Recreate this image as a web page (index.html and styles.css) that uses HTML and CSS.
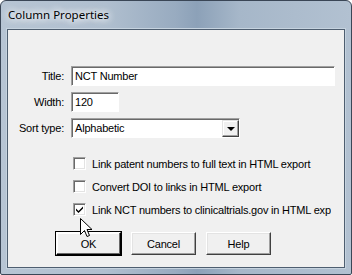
FILE: index.html
```html
<!DOCTYPE html>
<html lang="en">
<head>
    <meta charset="UTF-8">
    <title>Column Properties</title>
    <link rel="stylesheet" href="styles.css">
</head>
<body>
    <div class="window">
        <div class="titlebar">Column Properties</div>
        <div class="client">
            <!-- field rows -->
            <div class="fields">
                <label class="field-label">Title:</label>
                <div class="edit edit-title">NCT Number</div>
                <label class="field-label">Width:</label>
                <div class="edit edit-width">120</div>
                <label class="field-label">Sort type:</label>
                <div class="combo">
                    <div class="combo-text">Alphabetic</div>
                    <div class="combo-btn"><span class="arrow"></span></div>
                </div>
            </div>

            <!-- options -->
            <div class="checks">
                <div class="check-row">
                    <span class="box"></span>
                    <span class="check-text">Link patent numbers to full text in HTML export</span>
                </div>
                <div class="check-row">
                    <span class="box"></span>
                    <span class="check-text">Convert DOI to links in HTML export</span>
                </div>
                <div class="check-row">
                    <span class="box">
                        <svg width="9" height="9" viewBox="0 0 9 9"><path d="M1 3.5 L3.5 6 L8 1.5 L8 3.5 L3.5 8 L1 5.5 Z" fill="#000"/></svg>
                    </span>
                    <span class="check-text">Link NCT numbers to clinicaltrials.gov in HTML export</span>
                </div>
            </div>

            <div class="buttons">
                <button class="btn btn-default">OK</button>
                <button class="btn">Cancel</button>
                <button class="btn">Help</button>
            </div>

            <svg class="cursor" width="13" height="20" viewBox="0 0 13 20">
                <path d="M0.5 0.5 L0.5 16.5 L4.5 12.5 L7 18.5 L9.5 17.5 L7 11.5 L12 11.5 Z" fill="#fff" stroke="#000" stroke-width="1" stroke-linejoin="miter"/>
            </svg>
        </div>
    </div>
</body>
</html>
```

FILE: styles.css
```css
body {
    margin: 0;
    background: #fff;
}

.window {
    position: relative;
    width: 352px;
    height: 275px;
    box-sizing: border-box;
    border: 1px solid #3a4656;
    border-radius: 6px 6px 2px 2px;
    background: linear-gradient(90deg, #b7c5d4 0%, #b0bfcf 30%, #98abc0 50%, #8ca1b8 56%, #a6b7c9 68%, #b2c1d1 100%);
    display: flex;
    flex-direction: column;
}

.titlebar {
    height: 28px;
    padding-left: 7px;
    font-family: "Noto Sans", "Open Sans", sans-serif;
    font-size: 11.5px;
    line-height: 28px;
    color: #000;
    text-shadow: 0 0 6px #fff, 0 0 8px #fff, 0 0 10px #e8eef4;
}

.client {
    position: relative;
    flex: 1;
    margin: 0 6px 6px 6px;
    border: 1px solid #4e5e70;
    background: #f0f0f0;
    font-family: "Liberation Sans", Arial, sans-serif;
    font-size: 11px;
    letter-spacing: -0.2px;
    color: #000;
    box-shadow: 0 0 0 1px #c6d3df;
}

.fields {
    display: grid;
    grid-template-columns: 56px auto;
    column-gap: 7px;
    row-gap: 6px;
    margin-top: 36px;
    align-items: center;
}

.field-label {
    text-align: right;
}

.edit, .combo {
    height: 20px;
    box-sizing: border-box;
    background: #fff;
    border-top: 1px solid #a0a0a0;
    border-left: 1px solid #a0a0a0;
    border-right: 1px solid #fff;
    border-bottom: 1px solid #fff;
    box-shadow: inset 1px 1px 0 #696969;
    padding: 3px 0 0 3px;
    line-height: 13px;
}

.edit-title {
    width: 264px;
}

.edit-width {
    width: 48px;
}

.combo {
    width: 169px;
    display: flex;
    padding: 0;
}

.combo-text {
    flex: 1;
    padding: 3px 0 0 3px;
}

.combo-btn {
    width: 17px;
    height: 17px;
    margin: 1px 0 0 0;
    box-sizing: border-box;
    background: #f0f0f0;
    border-top: 1px solid #e3e3e3;
    border-left: 1px solid #e3e3e3;
    border-right: 1px solid #404040;
    border-bottom: 1px solid #404040;
    box-shadow: inset -1px -1px 0 #a0a0a0, inset 1px 1px 0 #fff;
    display: flex;
    align-items: center;
    justify-content: center;
}

.arrow {
    width: 0;
    height: 0;
    border-left: 4px solid transparent;
    border-right: 4px solid transparent;
    border-top: 4px solid #000;
    margin-top: 1px;
}

.checks {
    display: flex;
    flex-direction: column;
    gap: 10px;
    margin: 19px 0 0 65px;
}

.check-row {
    display: flex;
    align-items: center;
    gap: 6px;
    height: 13px;
}

.box {
    width: 13px;
    height: 13px;
    box-sizing: border-box;
    background: #fff;
    border-top: 1px solid #a0a0a0;
    border-left: 1px solid #a0a0a0;
    border-right: 1px solid #fff;
    border-bottom: 1px solid #fff;
    box-shadow: inset 1px 1px 0 #696969, inset -1px -1px 0 #e3e3e3;
    display: flex;
    align-items: center;
    justify-content: center;
}

.check-text {
    width: 239px;
    white-space: nowrap;
    overflow: hidden;
}

.buttons {
    display: flex;
    gap: 10px;
    margin: 16px 0 0 48px;
}

.btn {
    width: 65px;
    height: 23px;
    box-sizing: border-box;
    font-family: "Liberation Sans", Arial, sans-serif;
    font-size: 11px;
    letter-spacing: -0.2px;
    color: #000;
    background: #f0f0f0;
    border-top: 1px solid #fff;
    border-left: 1px solid #fff;
    border-right: 1px solid #404040;
    border-bottom: 1px solid #404040;
    box-shadow: inset -1px -1px 0 #a0a0a0, inset 1px 1px 0 #e3e3e3;
    padding: 0;
}

.btn-default {
    outline: 1px solid #000;
    border-right-color: #000;
    border-bottom-color: #000;
    box-shadow: inset -1px -1px 0 #696969, inset 1px 1px 0 #fff;
}

.cursor {
    position: absolute;
    left: 72px;
    top: 188px;
}
```
